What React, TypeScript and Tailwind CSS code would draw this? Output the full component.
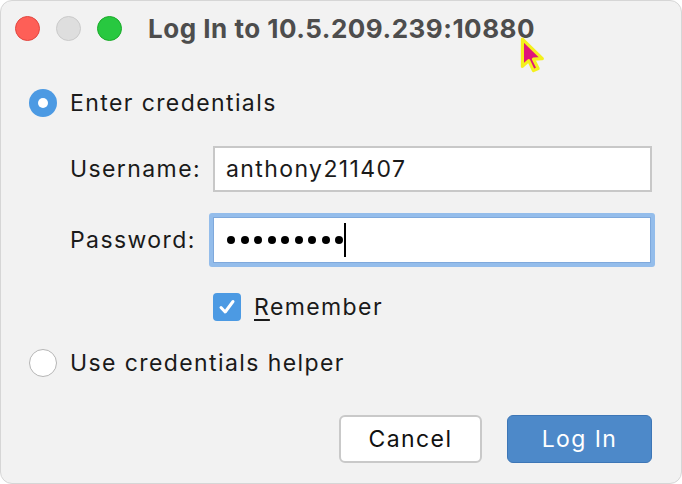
import React from 'react'

const font = { fontFamily: 'Inter, "Noto Sans", sans-serif' }

function Radio({ checked }: { checked: boolean }) {
  if (checked) {
    return (
      <div className="w-[28px] h-[28px] rounded-full bg-[#4c9ae3] flex items-center justify-center shrink-0">
        <div className="w-[10px] h-[10px] rounded-full bg-white" />
      </div>
    )
  }
  return <div className="w-[28px] h-[28px] rounded-full bg-white border-[1.5px] border-[#b5b5b5] shrink-0" />
}

export default function App() {
  return (
    <div className="w-[682px] h-[484px] bg-white relative overflow-hidden" style={font}>
      <div className="w-[682px] h-[484px] rounded-[12px] bg-[#f2f2f2] border border-[#d6d6d6] flex flex-col">
        {/* title bar */}
        <div className="h-[54px] flex items-center pl-[14px] shrink-0">
          <div className="flex gap-[16px]">
            <div className="w-[25px] h-[25px] rounded-full bg-[#fe5f57] border border-[#e2463f]" />
            <div className="w-[25px] h-[25px] rounded-full bg-[#dedede] border border-[#cacaca]" />
            <div className="w-[25px] h-[25px] rounded-full bg-[#28c840] border border-[#1aab29]" />
          </div>
          <div className="ml-[26px] text-[26px] font-bold text-[#4d4d4d] tracking-[0.5px]">
            Log In to 10.5.209.239:10880
          </div>
        </div>

        {/* body */}
        <div className="pl-[28px] pr-[29px] flex flex-col text-[23px] tracking-[1.4px] text-[#1a1a1a]">
          <div className="flex items-center gap-[13px] mt-[34px] h-[28px]">
            <Radio checked />
            <span>Enter credentials</span>
          </div>

          <div className="flex items-center mt-[29px] pl-[41px]">
            <span className="w-[143px]">Username:</span>
            <div className="flex-1 h-[46px] bg-white border-2 border-[#c8c8c8] flex items-center px-[11px]">
              anthony211407
            </div>
          </div>

          <div className="flex items-center mt-[21px] pl-[41px]">
            <span className="w-[139px]">Password:</span>
            <div className="flex-1 h-[54px] rounded-[3px] bg-[#94bdeb] p-[4px] mr-[-3px]">
              <div className="h-full bg-white border border-[#7fa9dc] flex items-center pl-[13px]">
                <div className="flex gap-[5.5px]">
                  {Array.from({ length: 9 }).map((_, i) => (
                    <div key={i} className="w-[8px] h-[8px] rounded-full bg-black" />
                  ))}
                </div>
                <div className="w-[2px] h-[34px] bg-black ml-[1px]" />
              </div>
            </div>
          </div>

          <div className="flex items-center mt-[26px] pl-[184px] h-[28px]">
            <div className="w-[28px] h-[28px] rounded-[4px] bg-[#4c9ae3] flex items-center justify-center">
              <svg width="20" height="20" viewBox="0 0 20 20" fill="none">
                <path d="M4 10.5 L8.2 15 L16 4.5" stroke="white" strokeWidth="3" strokeLinecap="round" strokeLinejoin="round" />
              </svg>
            </div>
            <span className="ml-[13px]">
              <span className="underline underline-offset-[4px]">R</span>emember
            </span>
          </div>

          <div className="flex items-center gap-[13px] mt-[28px] h-[28px]">
            <Radio checked={false} />
            <span>Use credentials helper</span>
          </div>

          <div className="flex justify-end gap-[25px] mt-[38px]">
            <button className="w-[143px] h-[48px] rounded-[6px] bg-white border-2 border-[#c9c9c9] text-[#111] tracking-[1.4px]">
              Cancel
            </button>
            <button className="w-[145px] h-[48px] rounded-[6px] bg-[#4d89c9] border border-[#3d76b6] text-white tracking-[1.4px]">
              Log In
            </button>
          </div>
        </div>
      </div>

      {/* pointer */}
      <svg className="absolute left-[519px] top-[36px]" width="32" height="42" viewBox="0 0 30 40">
        <path d="M3 3 L3 29 L9 23.5 L13.5 33 L18 31 L13.5 22 L22 21.5 Z" fill="#e0147a" stroke="#f4f01c" strokeWidth="3" strokeLinejoin="round" />
      </svg>
    </div>
  )
}
